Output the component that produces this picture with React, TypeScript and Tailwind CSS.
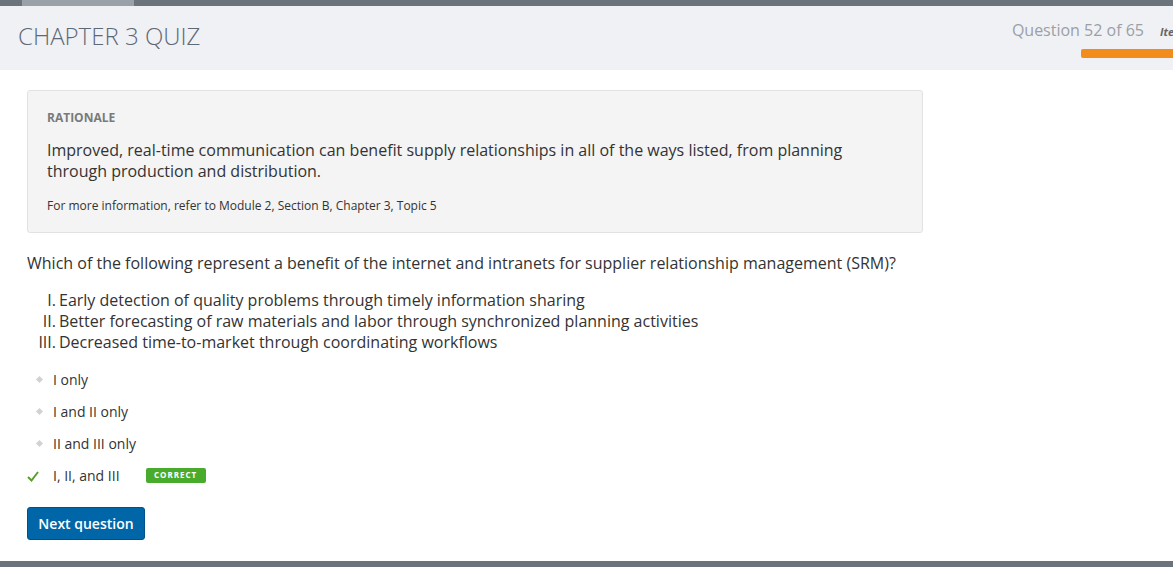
import React from "react";

export default function App() {
  const options = ["I only", "I and II only", "II and III only"];
  return (
    <div className="w-[1173px] h-[567px] overflow-hidden bg-white flex flex-col" style={{ fontFamily: '"Open Sans", sans-serif' }}>
      <div className="h-[6px] bg-[#6b747c] shrink-0 flex">
        <div className="ml-[22px] w-[112px] h-full bg-[#9aa1a8]" />
      </div>
      <div className="h-[64px] bg-[#f0f1f5] shrink-0 flex justify-between overflow-hidden">
        <div className="pl-[18px] pt-[12px] text-[24px] font-light text-[#5c6977]">CHAPTER 3 QUIZ</div>
        <div className="flex flex-col items-end">
          <div className="flex items-baseline pt-[12px] whitespace-nowrap">
            <span className="text-[16px] text-[#9aa0a6]">Question 52 of 65</span>
            <span className="ml-[16px] w-[13px] overflow-hidden text-[11px] font-bold italic text-[#666]">Item</span>
          </div>
          <div className="mt-[7px] w-[92px] h-[9px] bg-[#f28c1c] rounded-l-[2px]" />
        </div>
      </div>
      <div className="flex-1 px-[27px] pt-[20px]">
        <div className="w-[896px] bg-[#f4f4f4] border border-[#e2e2e2] rounded-[3px] pl-[19px] pr-[20px] pt-[19px] pb-[18px]">
          <div className="text-[12px] leading-[16px] font-bold text-[#7a7a7a]">RATIONALE</div>
          <div className="mt-[14px] text-[16px] leading-[21px] text-[#333] w-[810px]">
            Improved, real-time communication can benefit supply relationships in all of the ways listed, from planning through production and distribution.
          </div>
          <div className="mt-[16px] text-[12px] leading-[16px] text-[#333]">
            For more information, refer to Module 2, Section B, Chapter 3, Topic 5
          </div>
        </div>
        <div className="mt-[20px] text-[16px] leading-[21px] text-[#333]">
          Which of the following represent a benefit of the internet and intranets for supplier relationship management (SRM)?
        </div>
        <div className="mt-[16px] grid grid-cols-[29px_auto] gap-x-[3px] text-[16px] leading-[21px] text-[#333] w-fit">
          <div className="text-right">I.</div>
          <div>Early detection of quality problems through timely information sharing</div>
          <div className="text-right">II.</div>
          <div>Better forecasting of raw materials and labor through synchronized planning activities</div>
          <div className="text-right">III.</div>
          <div>Decreased time-to-market through coordinating workflows</div>
        </div>
        <div className="mt-[10px] flex flex-col">
          {options.map((o) => (
            <div key={o} className="h-[32px] flex items-center text-[14px] text-[#333]">
              <div className="w-[26px] flex justify-center">
                <div className="w-[5px] h-[5px] rotate-45 bg-[#d2d2d2] ml-[-2px]" />
              </div>
              <span>{o}</span>
            </div>
          ))}
          <div className="h-[32px] flex items-center text-[14px] text-[#333]">
            <div className="w-[26px] flex justify-start">
              <svg width="12" height="11" viewBox="0 0 12 11" className="mt-[2px]">
                <path d="M1 6 L4.5 9.5 L11 1" fill="none" stroke="#5a9e2f" strokeWidth="2" />
              </svg>
            </div>
            <span>I, II, and III</span>
            <span className="ml-[26px] w-[60px] h-[15px] bg-[#49ab2c] rounded-[2px] flex items-center justify-center text-[8px] font-bold text-white tracking-[1px]">CORRECT</span>
          </div>
        </div>
        <button className="mt-[16px] w-[118px] h-[33px] bg-[#0066a8] border border-[#00518a] rounded-[3px] text-white text-[14px] font-semibold">
          Next question
        </button>
      </div>
      <div className="h-[6px] bg-[#6b747c] shrink-0" />
    </div>
  );
}
